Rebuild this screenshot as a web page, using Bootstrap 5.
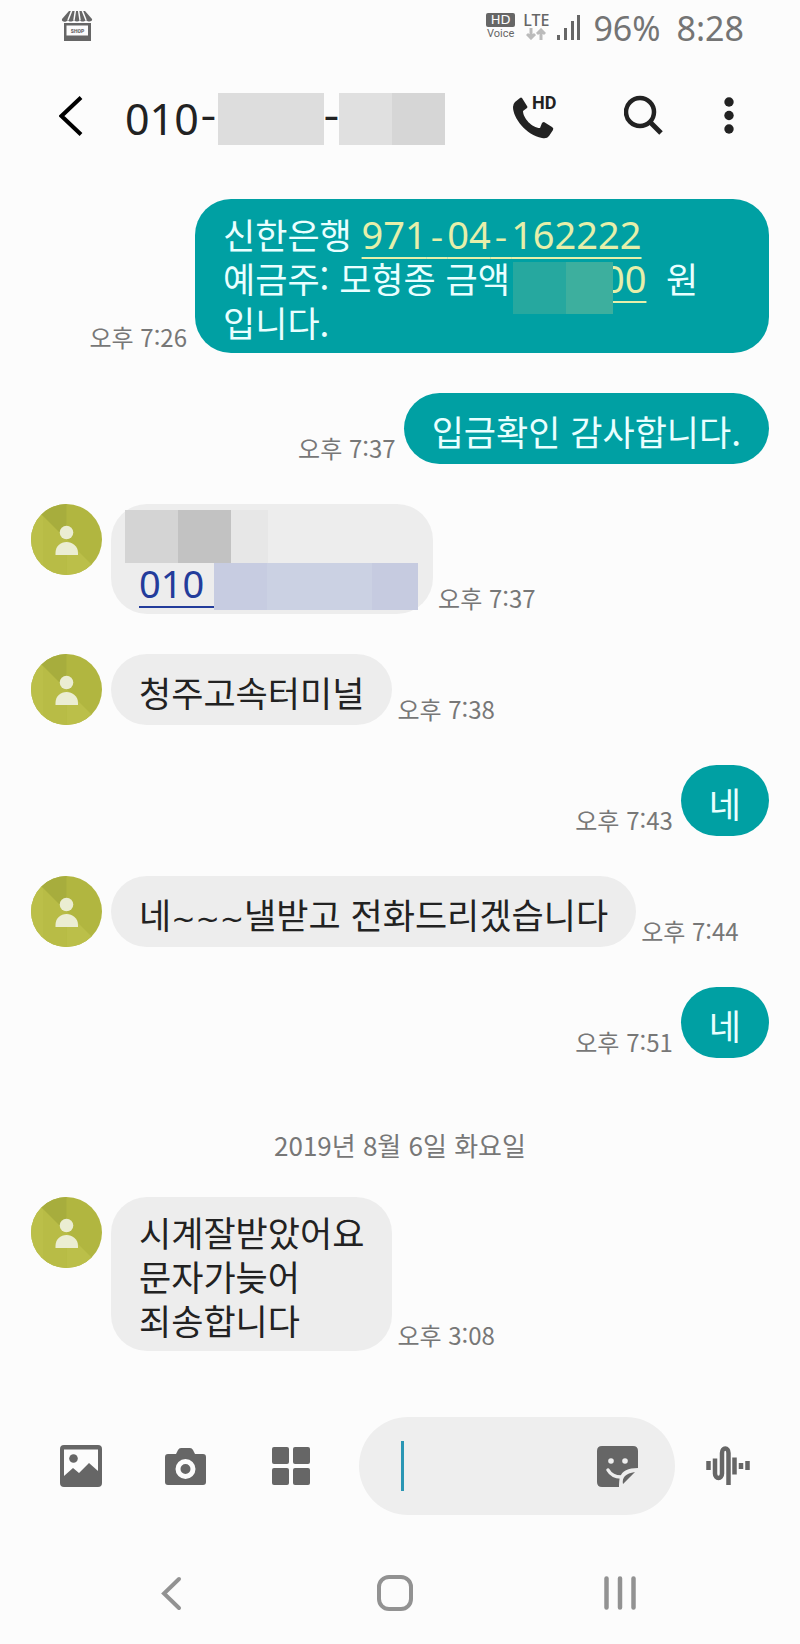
<!DOCTYPE html>
<html lang="ko">
<head>
<meta charset="utf-8">
<meta name="viewport" content="width=device-width, initial-scale=1">
<title>메시지</title>
<link href="https://cdn.jsdelivr.net/npm/bootstrap@5.3.0/dist/css/bootstrap.min.css" rel="stylesheet">
<style>
  body { background: #fcfcfc; color: #222; font-family: "Noto Sans CJK KR", sans-serif; font-size: 35px; line-height: 44px; word-break: keep-all; }
  svg { display: block; flex: none; }
  .plain { background: none; border: 0; padding: 0; color: inherit; }
  .dash { font-family: "Liberation Mono", monospace; line-height: 0; }

  /* status bar */
  .statusbar { height: 56px; padding: 0 56px 0 61px; color: #747474; font-family: "Noto Sans", sans-serif; font-size: 34px; }
  .tiny { width: 29px; font-family: Roboto, sans-serif; font-size: 11px; line-height: 13px; text-align: center; color: #666; }
  .hdbox { height: 14px; border-radius: 2px; background: #666; color: #fcfcfc; font-family: "DejaVu Sans", sans-serif; font-size: 13px; line-height: 14px; }
  .lte { font-family: "Noto Sans", sans-serif; font-size: 16px; font-weight: 500; line-height: 16px; color: #666; }

  /* title bar */
  .titlebar { height: 56px; margin-top: 32px; padding: 0 48px 0 59px; }
  .peer { font-family: "Noto Sans", sans-serif; font-weight: 400; font-size: 43px; line-height: 52px; margin: 6px 0 0 42px; }
  .peer .dash { width: 19px; display: flex; justify-content: center; }
  .veil-a, .veil-b { height: 52px; width: 106px; }
  .veil-a { background: #ddd; margin-right: -2px; }
  .veil-b { background: linear-gradient(90deg, #e0e0e0 50%, #d6d6d6 50%); margin-left: -2px; }
  .callhd { font-family: Roboto, sans-serif; font-weight: 700; font-size: 18px; }

  /* conversation */
  .thread { margin-top: 55px; padding: 0 31px; gap: 40px; }
  .bubble { min-height: 71px; padding: 13px 28px 9px; border-radius: 36px; display: flex; flex-direction: column; justify-content: center; }
  .incoming { background: #ededed; margin-left: 9px; }
  .outgoing { background: #00a0a3; color: #e9ffff; max-width: 574px; }
  .stamp { font-size: 24px; line-height: 32px; color: #777; white-space: nowrap; }
  .incoming + .stamp { margin-left: 5px; }
  .sent .stamp { margin-right: 8px; }
  .num { font-family: "Noto Sans", sans-serif; font-size: 38px; line-height: 1; color: #233c9b; text-decoration: underline; text-decoration-thickness: 2px; text-underline-offset: 8px; text-decoration-skip-ink: none; }
  .num .dash { font-size: 34px; }
  .outgoing .num { color: #e6efaa; }
  .wave { font-family: "DejaVu Sans", sans-serif; font-size: 29px; line-height: 0; }
  .veil { display: inline-block; position: relative; height: 44px; vertical-align: top; }
  .veil::after { content: ""; position: absolute; inset: 6px 0 -14px; background: var(--tiles); }
  .veil-sum { width: 100px; margin: 0 -10px 0 3px; --tiles: linear-gradient(90deg, #26a89f 53px, #3daf9e 53px); }
  .veil-name { width: 143px; margin-left: -14px; --tiles: linear-gradient(90deg, #d4d4d4 53px, #c2c2c2 53px 106px, #e7e7e7 106px); }
  .veil-name::after { inset: -7px 0 -2px; }
  .veil-phone { width: 204px; margin-right: -13px; --tiles: linear-gradient(90deg, #c7cce1 53px, #cbd1e3 53px 158px, #c6cbe0 158px); }
  .veil-phone::after { inset: 2px 0 -5px; }
  .dayline { font-size: 26px; line-height: 44px; color: #777; text-align: center; margin-top: 25px; margin-bottom: -10px; }

  /* composer */
  .composer { margin-top: 66px; padding: 0 20px 0 28px; color: #666; }
  .tool { width: 105px; height: 71px; flex: none; display: flex; align-items: center; justify-content: center; }
  .entry { min-width: 0; height: 98px; margin-left: 16px; padding: 0 37px 0 42px; border-radius: 49px; background: #eee; }
  .entry input { width: 0; min-width: 0; font-size: 32px; outline: 0; }
  .caret { width: 3px; height: 50px; background: #2a96b4; flex: none; }

  .navkeys { margin-top: 43px; padding: 0 68px 14px 59px; color: #929292; }
  .navkeys button { flex: 1 1 0; height: 70px; display: flex; align-items: center; justify-content: center; }
</style>
</head>
<body>
<svg class="position-absolute" width="0" height="0" aria-hidden="true">
  <symbol id="person" viewBox="0 0 71 71">
    <path fill="#b1b640" d="M0 0h71v71H0z"/>
    <path fill="#bbbf49" d="M0 0 35.500 35.500V71H0z"/>
    <path fill="#a7ad3d" d="M0 0h35.500v35.500z"/>
    <path fill="#bbbf49" d="M35.500 35.500 71 71H35.500z"/>
    <path fill="#b5ba44" d="M12 12 35.500 35.500V71H12z" opacity=".6"/>
    <circle cx="35.500" cy="28.500" r="6.800" fill="#ebedd2"/>
    <path fill="#ebedd2" d="M24.500 51v-2c0-7 5-11 11-11s11.500 4 11.500 11v2z"/>
  </symbol>
</svg>

<div class="statusbar d-flex align-items-center">
  <svg width="32" height="32" viewBox="0 0 32 32" fill="#666" class="me-auto mb-1" role="img" aria-label="SHOP">
    <path d="M8 1h16l7 8c1 2-3 4-6 1-2 2-5 2-6 0-2 2-4 2-6 0-2 2-5 2-6 0-2 3-7 2-6-1z"/>
    <path stroke="#fcfcfc" stroke-width="1.500" d="M11 0 7 10M14.500 0 13 10M17.500 0 19 10M21 0l4 10"/>
    <path fill-rule="evenodd" d="M3 13h27v18H3zM5.500 15.500v10h21.500v-10z"/>
    <text x="16.500" y="22.500" font-family="Roboto" font-size="5" font-weight="900" text-anchor="middle">SHOP</text>
  </svg>
  <div class="tiny me-2 mb-1"><div class="hdbox">HD</div><div>Voice</div></div>
  <div class="lte mb-1">LTE
    <svg width="20" height="12" viewBox="0 0 20 12" fill="none" stroke="#bbb" stroke-width="3" class="mx-auto"><path d="M5 0v10M1 6l4 4 4-4M15 12V2M11 6l4-4 4 4"/></svg>
  </div>
  <svg width="24" height="26" viewBox="0 0 24 26" fill="#666" class="ms-2 me-1"><path d="M0 20h3v5H0zM7 13h3v12H7zM14 6h3v19h-3zM20 0h3v25h-3z"/></svg>
  <span class="ms-2">96%</span>
  <span class="ms-3">8:28</span>
</div>

<header class="titlebar d-flex align-items-center">
  <button class="plain" aria-label="뒤로"><svg width="24" height="40" viewBox="0 0 24 40" fill="none" stroke="#000" stroke-width="4"><path d="M22 1.500 2.500 20 22 38.500"/></svg></button>
  <h1 class="peer d-flex align-items-center me-auto">010<span class="dash">-</span><span class="veil-a"></span><span class="dash">-</span><span class="veil-b"></span></h1>
  <button class="plain" aria-label="HD 전화">
    <svg width="48" height="46" viewBox="0 -2 48 46" fill="#222"><path d="M8 3Q9 2 10 3l5 8q1 1 0 2l-4 3c0 7 9 17 17 17l2-5q1-1 2-1l8 5q2 1 1 3l-4 6q-2 3-7 2C14 40 1 23 1 12Q1 9 3 7z"/><text class="callhd" x="20" y="14">HD</text></svg>
  </button>
  <button class="plain ms-5" aria-label="검색"><svg class="ms-3" width="40" height="42" viewBox="0 0 40 42" fill="none" stroke="#222"><circle cx="15" cy="17" r="14" stroke-width="4.500" transform="translate(1)"/><path stroke-width="5" d="m26 27 11 11"/></svg></button>
  <button class="plain ms-5" aria-label="더보기"><svg class="ms-1" width="36" height="38" viewBox="0 0 36 38" fill="#222"><circle cx="13" cy="5" r="4.700"/><circle cx="13" cy="18.500" r="4.700"/><circle cx="13" cy="32" r="4.700"/></svg></button>
</header>

<main class="thread d-flex flex-column">
  <div class="sent d-flex justify-content-end align-items-end"><time class="stamp">오후 7:26</time>
    <div class="bubble outgoing"><div>신한은행 <a class="num" href="#">971<span class="dash">-</span>04<span class="dash">-</span>162222</a><br>예금주: 모형종 금액<span class="veil veil-sum"></span><a class="num" href="#">00</a>&nbsp; 원 입니다.</div></div></div>

  <div class="sent d-flex justify-content-end align-items-end"><time class="stamp">오후 7:37</time>
    <div class="bubble outgoing">입금확인 감사합니다.</div></div>

  <div class="d-flex align-items-end"><svg class="align-self-start rounded-circle" width="71" height="71"><use href="#person"/></svg>
    <div class="bubble incoming"><div><span class="veil veil-name"></span></div><div class="text-nowrap"><a class="num" href="#">010&nbsp;</a><span class="veil veil-phone"></span></div></div>
    <time class="stamp">오후 7:37</time></div>

  <div class="d-flex align-items-end"><svg class="align-self-start rounded-circle" width="71" height="71"><use href="#person"/></svg>
    <div class="bubble incoming">청주고속터미널</div><time class="stamp">오후 7:38</time></div>

  <div class="sent d-flex justify-content-end align-items-end"><time class="stamp">오후 7:43</time>
    <div class="bubble outgoing">네</div></div>

  <div class="d-flex align-items-end"><svg class="align-self-start rounded-circle" width="71" height="71"><use href="#person"/></svg>
    <div class="bubble incoming"><div>네<span class="wave">~~~</span>낼받고 전화드리겠습니다</div></div><time class="stamp">오후 7:44</time></div>

  <div class="sent d-flex justify-content-end align-items-end"><time class="stamp">오후 7:51</time>
    <div class="bubble outgoing">네</div></div>

  <div class="dayline">2019년 8월 6일 화요일</div>

  <div class="d-flex align-items-end"><svg class="align-self-start rounded-circle" width="71" height="71"><use href="#person"/></svg>
    <div class="bubble incoming"><div>시계잘받았어요<br>문자가늦어<br>죄송합니다</div></div><time class="stamp">오후 3:08</time></div>
</main>

<form class="composer d-flex align-items-center">
  <button type="button" class="plain tool" aria-label="사진"><svg width="42" height="42" viewBox="0 0 42 42" fill="currentColor"><path fill-rule="evenodd" d="M4 0h34q4 0 4 4v34q0 4-4 4H4q-4 0-4-4V4q0-4 4-4M4 4.500V31l9-8 6 5 10-10 9 8V4.500z"/><circle cx="13.500" cy="13.500" r="4.300"/></svg></button>
  <button type="button" class="plain tool" aria-label="카메라"><svg width="41" height="37" viewBox="0 0 41 37" fill="currentColor"><path d="M3 6h8l2-4q1-2 3-2h9q2 0 3 2l2 4h8q3 0 3 3v25q0 3-3 3H3q-3 0-3-3V9q0-3 3-3"/><circle cx="20.500" cy="21" r="7.500" fill="none" stroke="#fcfcfc" stroke-width="5"/></svg></button>
  <button type="button" class="plain tool" aria-label="앱"><svg width="38" height="38" viewBox="0 0 38 38" fill="currentColor"><rect width="17" height="17" rx="2"/><rect x="21" width="17" height="17" rx="2"/><rect y="21" width="17" height="17" rx="2"/><rect x="21" y="21" width="17" height="17" rx="2"/></svg></button>
  <div class="entry d-flex align-items-center flex-grow-1">
    <span class="caret"></span>
    <input class="plain flex-grow-1" type="text" aria-label="메시지 입력">
    <button type="button" class="plain" aria-label="스티커"><svg width="41" height="41" viewBox="0 0 41 41"><path fill="#666" d="M5 0h31q5 0 5 5v17q-15 0-18 9-1 3-1 10H5q-5 0-5-5V5q0-5 5-5M38 26 26 38q-1-5 2-8t10-4"/><circle cx="14" cy="15" r="2.800" fill="#eee"/><circle cx="28" cy="15" r="2.800" fill="#eee"/><path d="M11 24q4 7 13 7" fill="none" stroke="#eee" stroke-width="3.500" stroke-linecap="round"/></svg></button>
  </div>
  <button type="button" class="plain tool" aria-label="음성"><svg width="44" height="40" viewBox="0 0 44 40" fill="none" stroke="currentColor" stroke-width="4.500"><path d="M2.500 15v9M9 12.500v15c0 6 7 6 7 0V7c0-6 6.500-6 6.500 0v32M28.500 11.500v17M35 17v6M41.500 15v9"/></svg></button>
</form>

<nav class="navkeys d-flex">
  <button class="plain" aria-label="이전"><svg width="22" height="35" viewBox="0 0 22 35" fill="none" stroke="currentColor" stroke-width="4" stroke-linecap="round"><path d="M19 3 4 17.500 19 32"/></svg></button>
  <button class="plain" aria-label="홈"><svg width="36" height="36" viewBox="0 0 36 36" fill="none" stroke="currentColor" stroke-width="4"><rect x="2" y="2" width="32" height="32" rx="10"/></svg></button>
  <button class="plain" aria-label="최근 앱"><svg width="32" height="34" viewBox="0 0 32 34" stroke="currentColor" stroke-width="4.500" stroke-linecap="round"><path d="M2.500 2.500v29M16 2.500v29M29.500 2.500v29"/></svg></button>
</nav>
<script src="https://cdn.jsdelivr.net/npm/bootstrap@5.3.0/dist/js/bootstrap.bundle.min.js"></script>
</body>
</html>
